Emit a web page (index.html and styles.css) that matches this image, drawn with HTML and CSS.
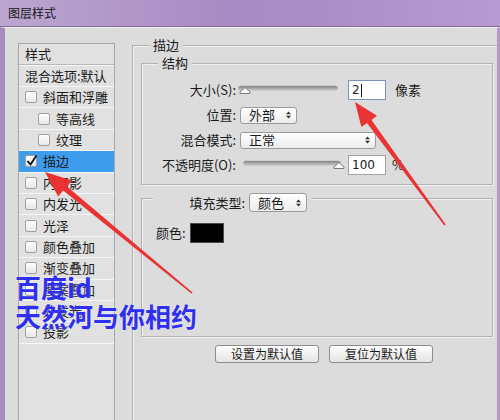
FILE: index.html
```html
<!DOCTYPE html>
<html lang="zh-CN">
<head>
<meta charset="utf-8">
<title>图层样式</title>
<link rel="stylesheet" href="styles.css">
</head>
<body>
<div class="window">
  <div class="titlebar">图层样式</div>
  <div class="frame">
    <div class="content">
      <div class="styles-panel">
        <div class="panel-head">样式</div>
        <div class="panel-blend">混合选项:默认</div>
        <ul class="style-list">
          <li class="item"><span class="cb"></span>斜面和浮雕</li>
          <li class="item sub"><span class="cb"></span>等高线</li>
          <li class="item sub"><span class="cb"></span>纹理</li>
          <li class="item active"><span class="cb"><svg class="check" width="14" height="14" viewBox="0 0 14 14"><path d="M2.5 7 L5.5 10.5 L11.5 1.5" fill="none" stroke="#111" stroke-width="1.9"/></svg></span>描边</li>
          <li class="item"><span class="cb"></span>内阴影</li>
          <li class="item"><span class="cb"></span>内发光</li>
          <li class="item"><span class="cb"></span>光泽</li>
          <li class="item"><span class="cb"></span>颜色叠加</li>
          <li class="item"><span class="cb"></span>渐变叠加</li>
          <li class="item"><span class="cb"></span>图案叠加</li>
          <li class="item"><span class="cb"></span>外发光</li>
          <li class="item"><span class="cb"></span>投影</li>
        </ul>
      </div>
      <div class="main-group">
        <div class="group-title">描边</div>
        <div class="struct-box">
          <div class="group-title">结构</div>
          <div class="form">
            <div class="lbl">大小(S):</div>
            <div class="ctl">
              <svg class="slider slider-size" width="100" height="12" viewBox="0 0 100 12">
                <defs><linearGradient id="tg1" x1="0" y1="0" x2="0" y2="1"><stop offset="0" stop-color="#7d7d7d"/><stop offset="1" stop-color="#c9c9c9"/></linearGradient></defs>
                <rect x="0.5" y="2" width="99" height="4" rx="2" fill="url(#tg1)" stroke="#a5a5a5" stroke-width="0.6"/>
                <path d="M2 9.5 L2 8 L7 3.5 L12 8 L12 9.5 Z" fill="#fbfbfb" stroke="#7c7c7c" stroke-width="1"/>
              </svg>
              <div class="input focus">2<span class="caret"></span></div>
              <span class="unit">像素</span>
            </div>
            <div class="lbl">位置:</div>
            <div class="ctl">
              <div class="select sel-pos"><span>外部</span><svg width="5" height="8" viewBox="0 0 5 8"><path d="M0 3.3 L2.5 0.5 L5 3.3 Z M0 4.7 L2.5 7.5 L5 4.7 Z" fill="#333"/></svg></div>
            </div>
            <div class="lbl">混合模式:</div>
            <div class="ctl">
              <div class="select sel-mode"><span>正常</span><svg width="5" height="8" viewBox="0 0 5 8"><path d="M0 3.3 L2.5 0.5 L5 3.3 Z M0 4.7 L2.5 7.5 L5 4.7 Z" fill="#333"/></svg></div>
            </div>
            <div class="lbl">不透明度(O):</div>
            <div class="ctl">
              <svg class="slider slider-op" width="102" height="12" viewBox="0 0 102 12">
                <defs><linearGradient id="tg2" x1="0" y1="0" x2="0" y2="1"><stop offset="0" stop-color="#7d7d7d"/><stop offset="1" stop-color="#c9c9c9"/></linearGradient></defs>
                <rect x="0.5" y="2" width="97" height="4" rx="2" fill="url(#tg2)" stroke="#a5a5a5" stroke-width="0.6"/>
                <path d="M91 9.5 L91 8 L96 3.5 L101 8 L101 9.5 Z" fill="#fbfbfb" stroke="#7c7c7c" stroke-width="1"/>
              </svg>
              <div class="input op">100</div>
              <span class="unit pct">%</span>
            </div>
          </div>
        </div>
        <div class="fill-box">
          <div class="fill-head">
            <span>填充类型:</span>
            <div class="select sel-fill"><span>颜色</span><svg width="5" height="8" viewBox="0 0 5 8"><path d="M0 3.3 L2.5 0.5 L5 3.3 Z M0 4.7 L2.5 7.5 L5 4.7 Z" fill="#333"/></svg></div>
          </div>
          <div class="color-row">
            <span>颜色:</span>
            <span class="swatch"></span>
          </div>
        </div>
        <div class="buttons">
          <button class="btn">设置为默认值</button>
          <button class="btn">复位为默认值</button>
        </div>
      </div>
    </div>
  </div>
  <div class="watermark">百度id<br>天然河与你相约</div>
  <svg class="arrows" width="500" height="420" viewBox="0 0 500 420">
    <polygon fill="#e93333" points="45,172 72,180.4 67,186.6 192.6,292.6 191.4,293.4 63.2,190.6 58.2,196.6"/>
    <polygon fill="#e93333" points="355,102 377,115.8 371.5,119.9 445.7,224.6 444.3,225.4 367,123 361.4,127"/>
  </svg>
</div>
</body>
</html>
```

FILE: styles.css
```css
html, body {
  margin: 0;
  padding: 0;
}

body {
  background: #dcdcdc;
  font-family: "Noto Sans CJK SC", "Noto Sans", sans-serif;
  font-size: 13px;
  line-height: 16px;
  color: #1b1b1b;
}

.window {
  position: relative;
  width: 500px;
  height: 420px;
  overflow: hidden;
}

.titlebar {
  height: 26px;
  line-height: 26px;
  padding-left: 8px;
  background: linear-gradient(to right, #bba6d0 0%, #a98bc3 45%, #ac8ec7 65%, #b69ad1 100%);
  border-bottom: 1px solid #7f6d91;
  color: #161616;
  font-size: 12px;
}

.frame {
  display: flex;
  box-sizing: border-box;
  height: 393px;
  border-top: 1px solid #f2f2f2;
  border-left: 5px solid #a68bbf;
  border-right: 3px solid #b49acb;
}

.content {
  flex: 1;
  min-width: 0;
  display: flex;
  align-items: flex-start;
  padding: 15px 0 0 13px;
}

/* ---------- left styles list ---------- */
.styles-panel {
  flex: none;
  width: 97px;
  height: 420px;
  box-sizing: border-box;
  border: 1px solid #a7a7a7;
  background: #e1e1e1;
}

.panel-head {
  height: 20px;
  line-height: 20px;
  padding-left: 6px;
  border-bottom: 1px solid #b8b8b8;
  box-shadow: 0 1px 0 #f7f7f7;
}

.panel-blend {
  height: 21px;
  line-height: 21px;
  padding-left: 6px;
  border-bottom: 1px solid #f7f7f7;
  white-space: nowrap;
}

.style-list {
  list-style: none;
  margin: 0;
  padding: 0;
}

.item {
  display: flex;
  align-items: center;
  gap: 6px;
  height: 20.4px;
  padding-left: 6px;
  border-bottom: 1px solid #f6f6f6;
  white-space: nowrap;
}

.item.sub {
  padding-left: 19px;
}

.item.active {
  background: #3e9cec;
}

.cb {
  position: relative;
  flex: none;
  width: 12px;
  height: 12px;
  box-sizing: border-box;
  border: 1px solid #a0a0a0;
  border-radius: 2px;
  background: linear-gradient(#fdfdfd, #e8e8e8);
}

.check {
  position: absolute;
  left: -1px;
  top: -2px;
}

/* ---------- right panel ---------- */
.main-group {
  position: relative;
  flex: 1;
  height: 420px;
  margin: 2px 0 0 17px;
  border-top: 1px solid #b2b2b2;
  border-left: 1px solid #b2b2b2;
  box-shadow: inset 1px 1px 0 #efefef;
}

.group-title {
  position: absolute;
  top: -9px;
  left: 16px;
  padding: 0 4px;
  background: #dcdcdc;
  line-height: 16px;
}

.struct-box {
  position: relative;
  margin: 17px 4px 0 8px;
  padding: 14px 0 6px;
  border: 1px solid #b2b2b2;
  box-shadow: inset 1px 1px 0 #efefef, 1px 1px 0 #efefef;
}

.form {
  display: grid;
  grid-template-columns: 94px 1fr;
  grid-template-rows: 24px 26px 24px 26px;
  column-gap: 4px;
  align-items: center;
}

.lbl {
  text-align: right;
  white-space: nowrap;
}

.ctl {
  display: flex;
  align-items: center;
}

.slider {
  display: block;
  flex: none;
}

.slider-size {
  margin-left: -2px;
}

.slider-op {
  margin-left: 3px;
}

.input {
  display: flex;
  align-items: center;
  flex: none;
  width: 38px;
  height: 20px;
  box-sizing: border-box;
  padding-left: 3px;
  border: 1px solid #a3a3a3;
  background: #fff;
  font-family: "DejaVu Sans", "Noto Sans", sans-serif;
  font-size: 12px;
}

.input.focus {
  margin-left: 10px;
  border-color: #7592b8;
}

.input.op {
  margin-left: 3px;
}

.caret {
  display: inline-block;
  width: 0;
  height: 13px;
  margin-left: 1px;
  border-left: 1px solid #111;
}

.unit {
  margin-left: 9px;
}

.unit.pct {
  margin-left: 6px;
}

.select {
  display: flex;
  align-items: center;
  justify-content: space-between;
  box-sizing: border-box;
  height: 17px;
  padding: 0 5px 0 8px;
  border: 1px solid #9b9b9b;
  border-radius: 3px;
  background: linear-gradient(#ffffff, #ececec);
}

.select svg {
  display: block;
}

.sel-pos {
  width: 57px;
}

.sel-mode {
  width: 136px;
}

.sel-fill {
  width: 58px;
  height: 19px;
}

.fill-box {
  position: relative;
  height: 139px;
  box-sizing: border-box;
  margin: 13px 4px 0 8px;
  padding: 24px 0 0 14px;
  border: 1px solid #b2b2b2;
  box-shadow: inset 1px 1px 0 #efefef, 1px 1px 0 #efefef;
}

.fill-head {
  position: absolute;
  top: -6px;
  left: 11px;
  display: flex;
  align-items: center;
  justify-content: flex-end;
  gap: 4px;
  width: 159px;
  height: 19px;
  box-sizing: border-box;
  padding-right: 5px;
  background: #dcdcdc;
}

.color-row {
  display: flex;
  align-items: center;
  gap: 4px;
}

.swatch {
  display: block;
  width: 34px;
  height: 20px;
  box-sizing: border-box;
  border: 1px solid #4a4a4a;
  background: #000;
}

.buttons {
  display: flex;
  gap: 10px;
  margin: 8px 0 0 82px;
}

.btn {
  width: 104px;
  height: 18px;
  padding: 0;
  border: 1px solid #8c8c8c;
  border-radius: 3px;
  background: linear-gradient(#fdfdfd, #e4e4e4);
  font-family: "Noto Sans CJK SC", "Noto Sans", sans-serif;
  font-size: 12px;
  line-height: 16px;
  color: #1b1b1b;
}

/* ---------- overlays ---------- */
.watermark {
  position: absolute;
  left: 15px;
  top: 272px;
  font-size: 26px;
  font-weight: bold;
  line-height: 29px;
  color: #2f2ff2;
  text-shadow: 0 0 2px rgba(255, 255, 255, 0.7);
  white-space: nowrap;
}

.arrows {
  position: absolute;
  left: 0;
  top: 0;
  pointer-events: none;
}
```
